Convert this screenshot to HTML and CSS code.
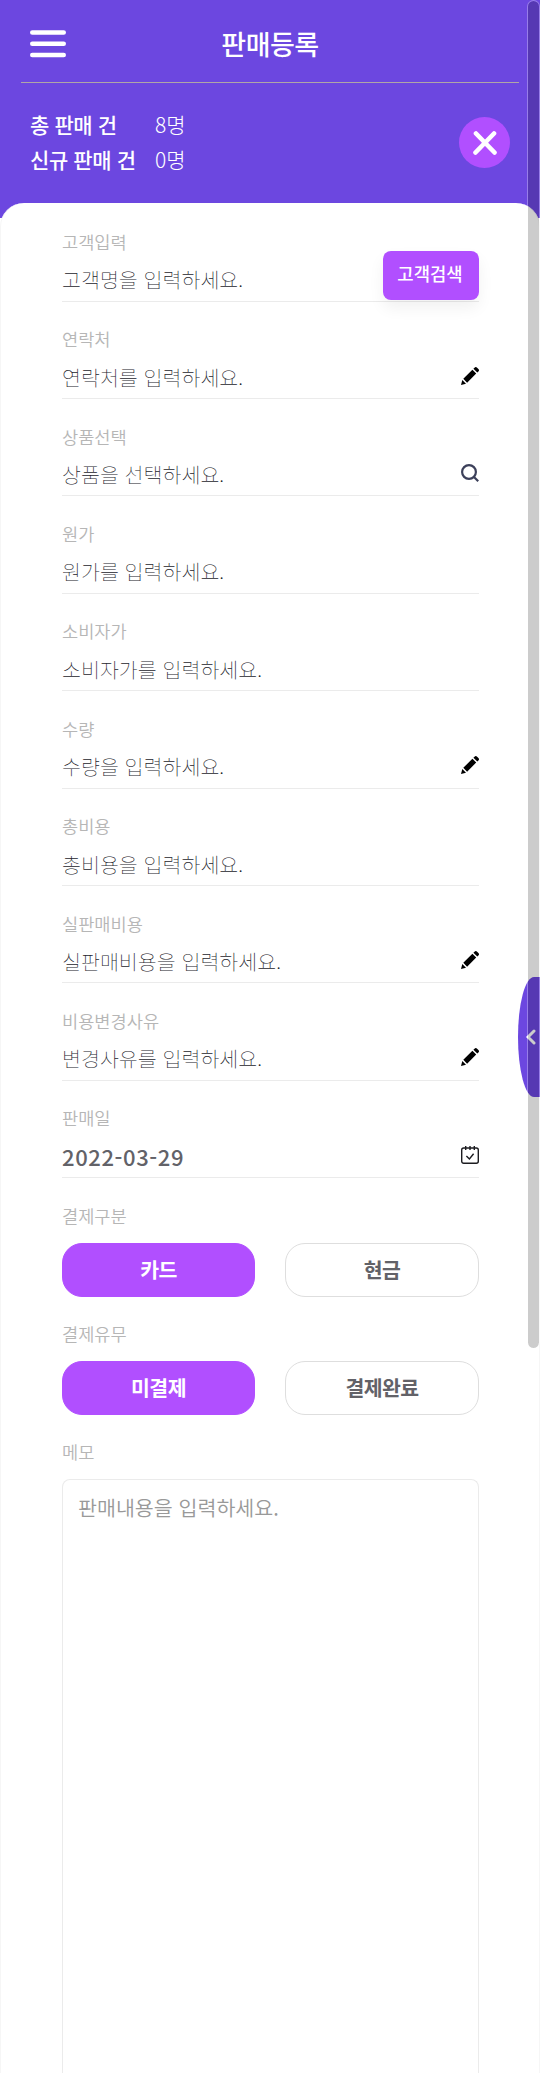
FILE: index.html
```html
<!DOCTYPE html>
<html lang="ko">
<head>
<meta charset="utf-8">
<title>판매등록</title>
<link rel="stylesheet" href="styles.css">
</head>
<body>
<svg class="defs" width="0" height="0" aria-hidden="true">
  <symbol id="pencil" viewBox="0 0 18 18">
    <path d="M0 18 1.3 13 5 16.7ZM2.3 11.8 11.4 2.8 15.2 6.6 6.1 15.7ZM12.4 1.8 13.5.7Q14.8-.6 16.1.7L17.4 2Q18.7 3.3 17.4 4.5L16.3 5.6Z"/>
  </symbol>
</svg>
<div class="page">
  <header class="header">
    <div class="topbar">
      <svg class="menu" viewBox="0 0 36 28"><path d="M2.3 2.5h31.4M2.3 13.7h31.4M2.3 25h31.4"/></svg>
      <h1 class="title">판매등록</h1>
    </div>
    <div class="summary">
      <dl class="stats">
        <dt>총 판매 건</dt><dd>8명</dd>
        <dt>신규 판매 건</dt><dd>0명</dd>
      </dl>
      <button class="close" aria-label="닫기"><svg viewBox="0 0 24 24"><path d="M3 2.5 21.5 21.5M21 2.5 2.5 21.5"/></svg></button>
    </div>
  </header>
  <main class="card">
    <section class="field"><span class="label">고객입력</span><div class="row"><span class="value">고객명을 입력하세요.</span></div><button class="search">고객검색</button></section>
    <section class="field"><span class="label">연락처</span><div class="row"><span class="value">연락처를 입력하세요.</span><svg class="icon"><use href="#pencil"/></svg></div></section>
    <section class="field"><span class="label">상품선택</span><div class="row"><span class="value">상품을 선택하세요.</span><svg class="icon lens" viewBox="0 0 18 18"><circle cx="8" cy="8" r="6.9"/><path d="m13 13 4.2 4.2"/></svg></div></section>
    <section class="field"><span class="label">원가</span><div class="row"><span class="value">원가를 입력하세요.</span></div></section>
    <section class="field"><span class="label">소비자가</span><div class="row"><span class="value">소비자가를 입력하세요.</span></div></section>
    <section class="field"><span class="label">수량</span><div class="row"><span class="value">수량을 입력하세요.</span><svg class="icon"><use href="#pencil"/></svg></div></section>
    <section class="field"><span class="label">총비용</span><div class="row"><span class="value">총비용을 입력하세요.</span></div></section>
    <section class="field"><span class="label">실판매비용</span><div class="row"><span class="value">실판매비용을 입력하세요.</span><svg class="icon"><use href="#pencil"/></svg></div></section>
    <section class="field"><span class="label">비용변경사유</span><div class="row"><span class="value">변경사유를 입력하세요.</span><svg class="icon"><use href="#pencil"/></svg></div></section>
    <section class="field"><span class="label">판매일</span><div class="row"><span class="value date">2022-03-29</span><svg class="icon calendar" viewBox="0 0 18 18"><rect x=".7" y="2" width="16.6" height="15.3" rx="2"/><path d="M4.7 0v4M9 0v4M13.3 0v4M5.4 9.9l3 3 4.2-5.2"/></svg></div></section>
    <section class="choice">
      <span class="label">결제구분</span>
      <div class="options"><button class="option selected">카드</button><button class="option">현금</button></div>
    </section>
    <section class="choice">
      <span class="label">결제유무</span>
      <div class="options"><button class="option selected">미결제</button><button class="option">결제완료</button></div>
    </section>
    <section class="choice memo">
      <span class="label">메모</span>
      <div class="note">판매내용을 입력하세요.</div>
    </section>
  </main>
  <button class="drawer" aria-label="열기"><svg viewBox="0 0 10 16"><path d="M8 2 2 8l6 6"/></svg></button>
  <div class="scrollbar"></div>
</div>
</body>
</html>
```

FILE: styles.css
```css
* { box-sizing: border-box; }
body { margin: 0; background: #fff; font-family: "Noto Sans CJK KR", "Noto Sans", sans-serif; }
button { margin: 0; padding: 0; border: 0; font-family: inherit; }
.defs { position: absolute; }
.page { position: relative; height: 2073px; overflow: hidden; display: flex; flex-direction: column; }

.header { height: 218px; flex: none; background: #6c47e0; color: #fff; padding: 0 21px; }
.topbar { height: 83px; border-bottom: 1px solid #b0a6a6; display: grid; grid-template-columns: 36px 1fr 36px; align-items: center; padding: 5px 9px 0; }
.menu { width: 36px; height: 28px; fill: none; stroke: #fff; stroke-width: 4.6; stroke-linecap: round; }
.title { margin: 0; text-align: center; font-size: 27px; line-height: 36px; font-weight: 500; letter-spacing: -.5px; white-space: nowrap; }
.summary { display: flex; justify-content: space-between; align-items: flex-start; padding: 24px 9px 0; }
.stats { margin: 0; display: grid; grid-template-columns: 125px auto; grid-auto-rows: 35px; font-size: 21px; line-height: 35px; white-space: nowrap; letter-spacing: -.4px; }
.stats dt { font-weight: 500; }
.stats dd { margin: 0; font-weight: 300; letter-spacing: 0; }
.close { width: 51px; height: 51px; margin-top: 10px; border-radius: 50%; background: #b14fff; display: flex; align-items: center; justify-content: center; }
.close svg { width: 24px; height: 24px; fill: none; stroke: #fff; stroke-width: 4.6; stroke-linecap: round; }

.card { flex: 1; margin-top: -15px; padding: 1.4px 60px 0 61px; background: #fff; border: solid #f6f6f6; border-width: 0 1px; border-radius: 24px 24px 0 0; display: flex; flex-direction: column; }
.field { position: relative; flex: none; height: 97.36px; padding-top: 27.6px; border-bottom: 1px solid #ebebeb; }
.label { display: block; font-size: 17.6px; line-height: 20px; color: #b6b6b6; font-weight: 350; white-space: nowrap; }
.row { display: flex; justify-content: space-between; align-items: center; height: 24px; margin-top: 15.4px; }
.value { font-size: 20.6px; line-height: 24px; font-weight: 100; color: #24242c; white-space: nowrap; }
.date { font-size: 22px; font-weight: 500; color: #626268; letter-spacing: .6px; }
.icon { width: 18px; height: 18px; margin-top: -2px; overflow: hidden; }
.lens { fill: none; stroke: #3c405a; stroke-width: 2.2; }
.calendar { fill: none; stroke: #1c1c20; stroke-width: 1.4; }
.search { position: absolute; right: 0; top: 46.6px; width: 96px; height: 49px; border-radius: 8px; background: #b14fff; color: #fff; font-size: 17.8px; line-height: 45px; font-weight: 500; padding: 0 2px 4px 0; box-shadow: 0 8px 16px rgba(0,0,0,.06); }

.choice { flex: none; height: 118px; padding-top: 28px; }
.options { display: grid; grid-template-columns: 193px 194px; justify-content: space-between; margin-top: 17px; }
.option { height: 54px; border: 1px solid #dedede; border-radius: 20px; background: #fff; color: #626268; font-size: 20.5px; line-height: 50px; font-weight: 700; letter-spacing: -.6px; padding-bottom: 2px; }
.selected { border-color: #b14fff; background: #b14fff; color: #fff; }
.memo { flex: 1; display: flex; flex-direction: column; }
.note { flex: 1; margin-top: 17px; padding: 14px 15px; border: 1px solid #ebebeb; border-bottom: 0; border-radius: 8px 8px 0 0; color: #999; font-size: 20.6px; line-height: 26px; font-weight: 350; white-space: nowrap; }

.drawer { position: absolute; right: 0; top: 977px; width: 22px; height: 120px; background: #6c47e0; border-radius: 16px 0 0 16px / 60px 0 0 60px; }
.drawer svg { position: absolute; left: 8px; top: 52px; width: 10px; height: 16px; fill: none; stroke: #fff; stroke-width: 3; stroke-linecap: round; }
.scrollbar { position: absolute; left: 527px; top: 0; width: 13px; height: 1349px; border: 1px solid rgba(255,255,255,.3); border-radius: 7px; background: rgba(0,0,0,.2); background-clip: padding-box; }
```
